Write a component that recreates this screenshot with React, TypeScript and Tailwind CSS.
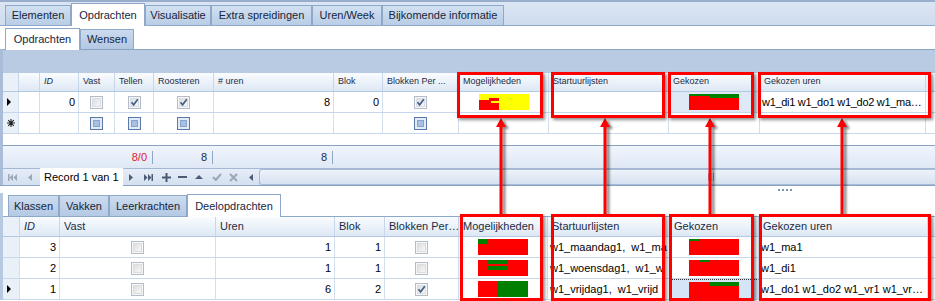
import React from 'react';

type Col = { w: string; label?: string; italic?: boolean };
type Cell = { c?: React.ReactNode; a?: 'l' | 'r' | 'c'; cls?: string };

const topCols: Col[] = [
  { w: 'w-[16px]' },
  { w: 'w-[21px]' },
  { w: 'w-[39px]', label: 'ID', italic: true },
  { w: 'w-[36px]', label: 'Vast' },
  { w: 'w-[39px]', label: 'Tellen' },
  { w: 'w-[60px]', label: 'Roosteren' },
  { w: 'w-[120px]', label: '# uren' },
  { w: 'w-[49px]', label: 'Blok' },
  { w: 'w-[76px]', label: 'Blokken Per ...' },
  { w: 'w-[90px]', label: 'Mogelijkheden' },
  { w: 'w-[120px]', label: 'Startuurlijsten' },
  { w: 'w-[91px]', label: 'Gekozen' },
  { w: 'w-[166px]', label: 'Gekozen uren' },
];

const bottomCols: Col[] = [
  { w: 'w-[17px]' },
  { w: 'w-[40px]', label: 'ID', italic: true },
  { w: 'w-[156px]', label: 'Vast' },
  { w: 'w-[119px]', label: 'Uren' },
  { w: 'w-[50px]', label: 'Blok' },
  { w: 'w-[74px]', label: 'Blokken Per…' },
  { w: 'w-[89px]', label: 'Mogelijkheden' },
  { w: 'w-[122px]', label: 'Startuurlijsten' },
  { w: 'w-[89px]', label: 'Gekozen' },
  { w: 'w-[169px]', label: 'Gekozen uren' },
];

const RED = '#ff0000';
const GREEN = '#008000';
const YELLOW = '#ffff00';

// little colour bar drawn in the Mogelijkheden / Gekozen cells
const Bar = ({ bg, parts }: { bg: string; parts: [number, number, number, number, string][] }) => (
  <svg width="50" height="16" className="block">
    <rect width="50" height="16" fill={bg} />
    {parts.map(([x, y, w, h, f], i) => (
      <rect key={i} x={x} y={y} width={w} height={h} fill={f} />
    ))}
  </svg>
);

const Check = ({ kind }: { kind: 'off' | 'on' | 'new' }) => {
  if (kind === 'new')
    return (
      <span className="block w-[13px] h-[13px] border border-[#5b79a8] bg-[#e3ebf7] p-[2px]">
        <span className="block w-full h-full bg-[#a8c0e2] border border-[#87a3cb]" />
      </span>
    );
  return (
    <span className="relative block w-[13px] h-[13px] border border-[#b3bcc8] bg-[#f7f7f7] p-px">
      <span className="block w-full h-full border border-[#dadee4] bg-gradient-to-br from-[#dedede] to-[#f7f7f7]" />
      {kind === 'on' && (
        <svg className="absolute left-0 top-0" width="11" height="11" viewBox="0 0 11 11">
          <path d="M2.5 5.2 L4.6 7.8 L8.8 2.2" stroke="#44608a" strokeWidth="1.7" fill="none" />
        </svg>
      )}
    </span>
  );
};

const RowArrow = () => (
  <svg width="5" height="8" viewBox="0 0 5 8"><path d="M0 0 L4 4 L0 8 Z" fill="#000" /></svg>
);

const NewRow = () => (
  <svg width="8" height="8" viewBox="0 0 8 8" stroke="#222" strokeWidth="1.1">
    <path d="M4 0 V8 M0 4 H8 M1.2 1.2 L6.8 6.8 M6.8 1.2 L1.2 6.8" />
  </svg>
);

function GridHeader({ cols, h, text }: { cols: Col[]; h: string; text: string }) {
  return (
    <div className={`flex ${h} bg-gradient-to-b from-[#fafcfe] to-[#dde8f5] border-b border-[#b5c8e1]`}>
      {cols.map((col, i) => (
        <div
          key={i}
          className={`${col.w} shrink-0 border-r border-[#c8d6e9] flex items-center pl-[4px] whitespace-nowrap overflow-hidden text-[#1d2c44] ${text} ${
            col.italic ? 'italic' : ''
          } ${i === 0 ? 'bg-[#eaf0f8]' : ''}`}
        >
          {col.label}
        </div>
      ))}
      <div className="flex-1" />
    </div>
  );
}

function GridRow({ cols, cells }: { cols: Col[]; cells: Cell[] }) {
  return (
    <div className="flex h-[21px] border-b border-[#c8d6e9]">
      {cols.map((col, i) => {
        const cell = cells[i] || {};
        const just = cell.a === 'r' ? 'justify-end pr-[3px]' : cell.a === 'c' ? 'justify-center' : 'justify-start pl-[2px]';
        return (
          <div
            key={i}
            className={`${col.w} shrink-0 border-r border-[#d4dfee] flex items-center overflow-hidden whitespace-pre ${just} ${
              i === 0 ? 'bg-[#eaf0f8] pl-[4px]' : ''
            } ${cell.cls || ''}`}
          >
            {cell.c}
          </div>
        );
      })}
      <div className="flex-1" />
    </div>
  );
}

const Tab = ({ label, w, active, h, inactive }: { label: string; w: string; active?: boolean; h: string; inactive: string }) => (
  <div
    className={`${w} ${h} shrink-0 flex items-center justify-center border border-b-0 border-[#8ea8c9] text-[#15263c] ${
      active ? 'bg-white -mb-px' : inactive
    }`}
  >
    {label}
  </div>
);

const NavIcon = ({ w, children }: { w: string; children: React.ReactNode }) => (
  <div className={`${w} shrink-0 flex items-center justify-center`}>{children}</div>
);

const boxes = [
  'left-[457px] top-[72px] w-[86px] h-[46px]',
  'left-[551px] top-[72px] w-[114px] h-[46px]',
  'left-[668px] top-[72px] w-[86px] h-[46px]',
  'left-[758px] top-[72px] w-[173px] h-[46px]',
  'left-[460px] top-[214px] w-[83px] h-[87px]',
  'left-[551px] top-[214px] w-[114px] h-[87px]',
  'left-[669px] top-[214px] w-[85px] h-[87px]',
  'left-[759px] top-[214px] w-[172px] h-[87px]',
];

const arrowX = [501, 605, 710, 842];

export default function App() {
  const gekozenSel = 'bg-[#dfe8f5] justify-center';
  return (
    <div className="relative w-[935px] h-[301px] overflow-hidden bg-white text-[11px] text-black font-['Liberation_Sans',Arial,sans-serif]">
      {/* main tabs */}
      <div className="h-[26px] bg-gradient-to-b from-[#dbe6f3] to-[#cfdcee] border-t-2 border-[#98aecb] border-b border-b-[#8ea8c9] flex items-end pl-[5px]">
        <Tab label="Elementen" w="w-[66px]" h="h-[20px]" inactive="bg-gradient-to-b from-[#d2e0f1] to-[#b9cde6]" />
        <Tab label="Opdrachten" w="w-[74px]" h="h-[23px]" active inactive="" />
        <Tab label="Visualisatie" w="w-[66px]" h="h-[20px]" inactive="bg-gradient-to-b from-[#d2e0f1] to-[#b9cde6]" />
        <Tab label="Extra spreidingen" w="w-[101px]" h="h-[20px]" inactive="bg-gradient-to-b from-[#d2e0f1] to-[#b9cde6]" />
        <Tab label="Uren/Week" w="w-[70px]" h="h-[20px]" inactive="bg-gradient-to-b from-[#d2e0f1] to-[#b9cde6]" />
        <Tab label="Bijkomende informatie" w="w-[122px]" h="h-[20px]" inactive="bg-gradient-to-b from-[#d2e0f1] to-[#b9cde6]" />
      </div>

      {/* sub tabs */}
      <div className="h-[23px] bg-white flex items-end pl-[5px]">
        <Tab label="Opdrachten" w="w-[75px]" h="h-[22px]" active inactive="" />
        <Tab label="Wensen" w="w-[54px]" h="h-[20px]" inactive="bg-gradient-to-b from-[#cbdaee] to-[#b3c8e3]" />
      </div>

      {/* top grid */}
      <div className="border-l-[3px] border-[#a9bdd8]">
        <div className="h-[24px] bg-[#b8cbe3] border-t border-[#8aa3c4]" />
        <GridHeader cols={topCols} h="h-[19px]" text="text-[9px]" />
        <GridRow
          cols={topCols}
          cells={[
            { c: <RowArrow /> },
            {},
            { c: '0', a: 'r' },
            { c: <Check kind="off" />, a: 'c' },
            { c: <Check kind="on" />, a: 'c' },
            { c: <Check kind="on" />, a: 'c' },
            { c: '8', a: 'r' },
            { c: '0', a: 'r' },
            { c: <Check kind="on" />, a: 'c' },
            {
              c: (
                <Bar
                  bg={YELLOW}
                  parts={[
                    [0, 6, 10, 10, RED],
                    [10, 4, 10, 12, RED],
                    [12, 7, 8, 2, YELLOW],
                  ]}
                />
              ),
              a: 'c',
            },
            {},
            { c: <Bar bg={RED} parts={[[0, 0, 50, 4, GREEN], [0, 2, 20, 2, RED]]} />, a: 'c', cls: gekozenSel },
            { c: 'w1_di1 w1_do1 w1_do2 w1_ma…', cls: 'tracking-[-0.3px]' },
          ]}
        />
        <GridRow
          cols={topCols}
          cells={[
            { c: <NewRow /> },
            {},
            {},
            { c: <Check kind="new" />, a: 'c' },
            { c: <Check kind="new" />, a: 'c' },
            { c: <Check kind="new" />, a: 'c' },
            {},
            {},
            { c: <Check kind="new" />, a: 'c' },
          ]}
        />
        <div className="h-[11px]" />

        {/* footer summary */}
        <div className="h-[23px] flex items-center border-t border-[#8aa3c4] bg-gradient-to-b from-[#f0f5fc] to-[#dfe8f5]">
          {topCols.map((col, i) => (
            <div key={i} className={`${col.w} shrink-0 flex justify-end`}>
              {i >= 4 && i <= 6 && (
                <span className={`h-[13px] leading-[13px] border-r border-[#8fa6c5] pr-[5px] mr-px ${i === 4 ? 'text-[#e4202c]' : 'text-[#1d2c44]'}`}>
                  {i === 4 ? '8/0' : '8'}
                </span>
              )}
            </div>
          ))}
        </div>

        {/* navigator + horizontal scroll */}
        <div className="h-[17px] flex border-t border-[#a3b8d5] bg-gradient-to-b from-[#e6edf7] to-[#d4e0f0]">
          <NavIcon w="w-[19px]">
            <svg width="9" height="7" viewBox="0 0 9 7" fill="#9ba7b6"><rect x="0" y="0" width="1.5" height="7" /><path d="M5 0 L1.5 3.5 L5 7 Z M9 0 L5.5 3.5 L9 7 Z" /></svg>
          </NavIcon>
          <NavIcon w="w-[15px]">
            <svg width="4" height="7" viewBox="0 0 4 7" fill="#9ba7b6"><path d="M4 0 L0 3.5 L4 7 Z" /></svg>
          </NavIcon>
          <div className="ml-[3px] w-[83px] shrink-0 bg-white -mt-px h-[18px] flex items-center pl-[4px] text-[11px]">Record 1 van 1</div>
          <NavIcon w="w-[15px]">
            <svg width="4" height="7" viewBox="0 0 4 7" fill="#4a5b73"><path d="M0 0 L4 3.5 L0 7 Z" /></svg>
          </NavIcon>
          <NavIcon w="w-[20px]">
            <svg width="9" height="7" viewBox="0 0 9 7" fill="#4a5b73"><path d="M0 0 L3.5 3.5 L0 7 Z M4 0 L7.5 3.5 L4 7 Z" /><rect x="7.5" y="0" width="1.5" height="7" /></svg>
          </NavIcon>
          <NavIcon w="w-[16px]">
            <svg width="9" height="9" viewBox="0 0 9 9" fill="#4a5b73"><rect x="3.5" y="0" width="2" height="9" /><rect x="0" y="3.5" width="9" height="2" /></svg>
          </NavIcon>
          <NavIcon w="w-[16px]">
            <svg width="9" height="2" viewBox="0 0 9 2" fill="#4a5b73"><rect width="9" height="2" /></svg>
          </NavIcon>
          <NavIcon w="w-[18px]">
            <svg width="8" height="4" viewBox="0 0 8 4" fill="#4a5b73"><path d="M0 4 L4 0 L8 4 Z" /></svg>
          </NavIcon>
          <NavIcon w="w-[17px]">
            <svg width="10" height="8" viewBox="0 0 10 8"><path d="M1 4 L3.8 7 L9 1" stroke="#9ba7b6" strokeWidth="2" fill="none" /></svg>
          </NavIcon>
          <NavIcon w="w-[17px]">
            <svg width="9" height="9" viewBox="0 0 9 9"><path d="M1 1 L8 8 M8 1 L1 8" stroke="#9ba7b6" strokeWidth="2" /></svg>
          </NavIcon>
          <NavIcon w="w-[17px]">
            <svg width="4" height="7" viewBox="0 0 4 7" fill="#4a5b73"><path d="M4 0 L0 3.5 L4 7 Z" /></svg>
          </NavIcon>
          <div className="flex-1 flex items-center justify-start border border-r-0 border-[#a9bcd6] rounded-l-[3px] bg-gradient-to-b from-[#eef3fa] to-[#d6e1f0] pl-[448px]">
            <svg width="6" height="8" viewBox="0 0 6 8" fill="#8ea2bd"><rect x="0" width="1" height="8" /><rect x="2.5" width="1" height="8" /><rect x="5" width="1" height="8" /></svg>
          </div>
        </div>
      </div>

      {/* splitter */}
      <div className="h-[8px] border-t border-[#8aa3c4] flex justify-start pl-[778px] pt-[3px]">
        <div className="flex gap-[2px] h-[2px]">
          <span className="w-[2px] h-[2px] bg-[#7d93b3]" />
          <span className="w-[2px] h-[2px] bg-[#7d93b3]" />
          <span className="w-[2px] h-[2px] bg-[#7d93b3]" />
          <span className="w-[2px] h-[2px] bg-[#7d93b3]" />
        </div>
      </div>

      {/* bottom section */}
      <div className="border-l-[3px] border-[#b7c9e1]">
        <div className="h-[23px] flex items-end pl-[5px] bg-white">
          <Tab label="Klassen" w="w-[51px]" h="h-[21px]" inactive="bg-gradient-to-b from-[#cddcef] to-[#b4c9e4]" />
          <Tab label="Vakken" w="w-[50px]" h="h-[21px]" inactive="bg-gradient-to-b from-[#cddcef] to-[#b4c9e4]" />
          <Tab label="Leerkrachten" w="w-[78px]" h="h-[21px]" inactive="bg-gradient-to-b from-[#cddcef] to-[#b4c9e4]" />
          <Tab label="Deelopdrachten" w="w-[94px]" h="h-[23px]" active inactive="" />
        </div>
        <div className="border-t border-[#8ea8c9]">
          <GridHeader cols={bottomCols} h="h-[20px]" text="text-[11px]" />
          <GridRow
            cols={bottomCols}
            cells={[
              {},
              { c: '3', a: 'r' },
              { c: <Check kind="off" />, a: 'c' },
              { c: '1', a: 'r' },
              { c: '1', a: 'r' },
              { c: <Check kind="off" />, a: 'c' },
              { c: <Bar bg={RED} parts={[[0, 0, 10, 5, GREEN]]} />, a: 'c' },
              { c: 'w1_maandag1,  w1_ma' },
              { c: <Bar bg={RED} parts={[[0, 0, 10, 2, GREEN]]} />, a: 'c' },
              { c: 'w1_ma1' },
            ]}
          />
          <GridRow
            cols={bottomCols}
            cells={[
              {},
              { c: '2', a: 'r' },
              { c: <Check kind="off" />, a: 'c' },
              { c: '1', a: 'r' },
              { c: '1', a: 'r' },
              { c: <Check kind="off" />, a: 'c' },
              { c: <Bar bg={RED} parts={[[10, 0, 20, 4, GREEN], [10, 6, 20, 4, GREEN]]} />, a: 'c' },
              { c: 'w1_woensdag1,  w1_w' },
              { c: <Bar bg={RED} parts={[[10, 0, 10, 2, GREEN]]} />, a: 'c' },
              { c: 'w1_di1' },
            ]}
          />
          <GridRow
            cols={bottomCols}
            cells={[
              { c: <RowArrow /> },
              { c: '1', a: 'r' },
              { c: <Check kind="off" />, a: 'c' },
              { c: '6', a: 'r' },
              { c: '2', a: 'r' },
              { c: <Check kind="on" />, a: 'c' },
              { c: <Bar bg={RED} parts={[[20, 0, 30, 16, GREEN]]} />, a: 'c' },
              { c: 'w1_vrijdag1,  w1_vrijd' },
              {
                c: <Bar bg={RED} parts={[[20, 0, 30, 4, GREEN]]} />,
                a: 'c',
                cls: 'bg-[#d6e4f7] border-t border-dotted border-t-[#333]',
              },
              { c: 'w1_do1 w1_do2 w1_vr1 w1_vr…' },
            ]}
          />
        </div>
      </div>

      {/* annotation overlay: arrows */}
      <svg className="absolute left-0 top-0 pointer-events-none" width="935" height="301">
        <defs>
          <filter id="sh" x="-50%" y="-10%" width="200%" height="120%">
            <feGaussianBlur stdDeviation="1.2" />
          </filter>
        </defs>
        {arrowX.map((x) => (
          <g key={x}>
            <g filter="url(#sh)" opacity="0.45" transform="translate(3 2)">
              <rect x={x - 1.5} y={124} width={3} height={90} fill="#000" />
              <path d={`M${x - 5} 127 L${x} 118 L${x + 5} 127 Z`} fill="#000" />
            </g>
            <rect x={x - 1.5} y={124} width={3} height={90} fill={RED} />
            <path d={`M${x - 5} 127 L${x} 118 L${x + 5} 127 Z`} fill={RED} />
          </g>
        ))}
      </svg>

      {/* annotation overlay: boxes */}
      {boxes.map((b) => (
        <div
          key={b}
          className={`absolute ${b} border-[3px] border-[#ff0000] pointer-events-none shadow-[2px_2px_3px_rgba(0,0,0,0.45)]`}
        />
      ))}
    </div>
  );
}
